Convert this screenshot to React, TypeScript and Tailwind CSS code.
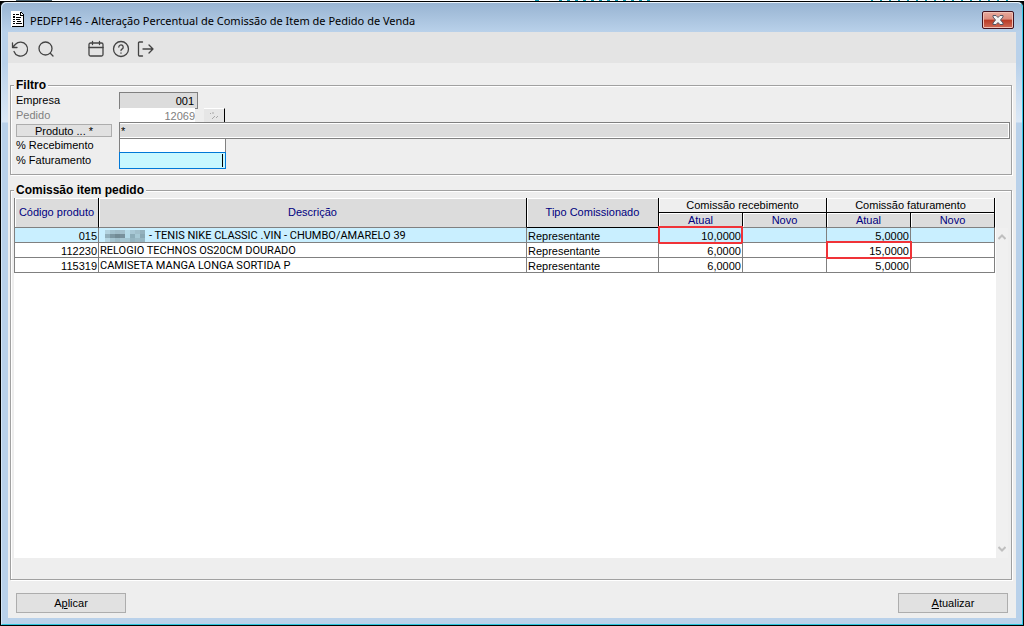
import React, { useState } from 'react'

const rows = [
  { codigo: '015', descricao: '- TENIS NIKE CLASSIC .VIN - CHUMBO/AMARELO 39', tipo: 'Representante', receb: '10,0000', fat: '5,0000', oculto: true, mark: 'receb' },
  { codigo: '112230', descricao: 'RELOGIO TECHNOS OS20CM DOURADO', tipo: 'Representante', receb: '6,0000', fat: '15,0000', oculto: false, mark: 'fat' },
  { codigo: '115319', descricao: 'CAMISETA MANGA LONGA SORTIDA P', tipo: 'Representante', receb: '6,0000', fat: '5,0000', oculto: false, mark: '' },
]

const mosaic = [
  '#b3d3e0', '#a3c2ce', '#9fbcc8', '#a3c0cc', '#b6dbe8', '#a8c8d5', '#a0bfcb', '#94b1bd',
  '#93b0bc', '#7c97a2', '#728b95', '#78919c', '#b4dbe9', '#8cadb9', '#a6c9d5', '#8aa8b4',
  '#b5d6e3', '#a5c5d1', '#9dbcc8', '#a6c6d2', '#a3c6d3', '#94b5c1', '#9abac6', '#97b6c2',
]

const Hidden = () => (
  <svg className="block" width="40" height="12" viewBox="0 0 40 12" shapeRendering="crispEdges" aria-hidden="true">
    {mosaic.map((c, i) => (
      <rect key={i} x={(i % 8) * 5} y={Math.floor(i / 8) * 4} width="5" height="4" fill={c} />
    ))}
  </svg>
)

const DocIcon = () => (
  <svg width="14" height="17" viewBox="0 0 14 17" shapeRendering="crispEdges">
    <path d="M0 0h9l4 4v12H0z" fill="#fff" />
    <path d="M1 15h12v1H1zM12 4h1v12h-1zM9 1h1v3H9zM9 4h4v1H9zM10 1h1v1h-1zM11 2h1v1h-1zM12 3h1v1h-1z" fill="#000" />
    <path d="M2 3h2v1H2zM5 3h3v1H5zM2 5h2v2H2zM5 6h5v1H5zM2 8h2v1H2zM5 8h4v1H5zM2 10h2v1H2zM6 10h4v1H6zM2 12h2v1H2zM5 12h6v1H5z" fill="#000" />
  </svg>
)

const iconProps = {
  width: 18,
  height: 18,
  viewBox: '0 0 18 18',
  fill: 'none',
  stroke: '#444',
  strokeWidth: 1.3,
  strokeLinecap: 'round' as const,
  strokeLinejoin: 'round' as const,
}

const tools = [
  { name: 'Desfazer', gap: '', icon: <svg {...iconProps}><path d="M1.500 3v4.500h4.500M1.700 7.300 4.500 4.300A7 7 0 1 1 3 11.500" /></svg> },
  { name: 'Pesquisar', gap: 'ml-2', icon: <svg {...iconProps}><circle cx="8.500" cy="8.500" r="6.500" /><path d="M13.300 13.300 16 16" /></svg> },
  { name: 'Agenda', gap: 'ml-8', icon: <svg {...iconProps}><rect x="2" y="3" width="14" height="13" rx="1.500" /><path d="M2 7.500h14M5.500 1.500v3M12.500 1.500v3" /></svg> },
  { name: 'Ajuda', gap: 'ml-[7px]', icon: <svg {...iconProps}><circle cx="9" cy="9" r="7.500" /><path d="M6.800 7a2.200 2.200 0 1 1 3.500 1.900C9.500 9.400 9 9.800 9 10.500M9 13v.2" /></svg> },
  { name: 'Sair', gap: 'ml-[7px]', icon: <svg {...iconProps}><path d="M5.500 2H2.500a1 1 0 0 0-1 1v12a1 1 0 0 0 1 1h3M6 9h10M12 5l4 4-4 4" /></svg> },
]

const group = 'min-w-0 border border-[#a0a0a0] shadow-[1px_1px_0_#fff,inset_1px_1px_0_#fff]'
const legend = 'bg-[#eee] px-0.5 text-[12px] leading-[14px] font-bold'
const label = 'w-[103px] shrink-0 pb-0.5'
const th = 'border-r border-b border-black p-0 font-normal shadow-[inset_1px_1px_0_#fff]'
const td = 'relative border-r border-b border-[#808080] px-px pt-0.5 pb-0 leading-[12px] whitespace-nowrap'
const action = 'h-5 w-[110px] border border-[#adadad] bg-[#e1e1e1] text-center'

const App = () => {
  const [receb, setReceb] = useState('')
  const [fat, setFat] = useState('')

  return (
    <div className="flex min-h-screen flex-col bg-black font-['Liberation_Sans',Arial,sans-serif] text-[11px] leading-[14px] text-black">
      {/* slice of the screen behind the window */}
      <div className="flex h-px bg-white">
        <span className="ml-4 w-9 bg-[#4d6470]"></span>
        <span className="ml-[483px] w-1 bg-[#0c9bb0]"></span>
        <span className="ml-5 w-24 bg-[repeating-linear-gradient(90deg,#0c9bb0_0_3px,#fff_3px_8px)]"></span>
        <span className="ml-[216px] w-[138px] bg-[repeating-linear-gradient(90deg,#0c9bb0_0_2px,#fff_2px_9px)]"></span>
      </div>

      <div className="flex flex-1 flex-col rounded-t-md border border-black bg-[#b9d1ea]">
        <div className="flex flex-1 flex-col rounded-t-md border-t border-r border-b border-l border-t-[#eaf3fb] border-r-[#35c8e8] border-b-[#2cc4dc] border-l-[#d5e6f5] bg-[linear-gradient(#98b4d2_0px,#b9d1ea_29px,#b9d1ea_60px,#dbe8f6_119px,#b9d1ea_120px)] px-[6px] pb-[6px]">
          <header className="flex h-[29px] items-center">
            <span className="mt-1 ml-[3px]"><DocIcon /></span>
            <h1 className="ml-[5px] pt-1.5 font-['Noto_Sans','Segoe_UI',sans-serif] text-[11px] leading-4">PEDFP146 - Alteração Percentual de Comissão de Item de Pedido de Venda</h1>
            <button type="button" aria-label="Fechar" className="mt-1 mr-0.5 ml-auto flex h-[18px] w-8 items-center justify-center rounded-xs border border-[#43131f] bg-[linear-gradient(#e8a99c_0%,#dc8c7d_45%,#b93a25_50%,#cf6b57_100%)] shadow-[inset_0_0_0_1px_#f0c0b5]">
              <svg width="12" height="10" viewBox="0 0 12 10">
                <path d="M1 .5h3l2 2 2-2h3v1.500L8.500 5 11 8v1.500H8l-2-2-2 2H1V8l2.500-3L1 2z" fill="#f4f4f4" stroke="#535666" />
              </svg>
            </button>
          </header>

          <main className="flex flex-1 flex-col bg-[#eee]">
            <nav className="flex h-[31px] items-center bg-[#e4e4e4] pl-[3px]">
              {tools.map(t => (
                <button key={t.name} type="button" aria-label={t.name} className={'pt-0.5 ' + t.gap}>{t.icon}</button>
              ))}
            </nav>

            <form className="flex flex-1 flex-col pt-[15px] pr-1 pb-[5px] pl-0.5" onSubmit={e => e.preventDefault()}>
              <fieldset className={group + ' pt-px pr-px pb-[6px] pl-[3px]'}>
                <legend className={legend}>Filtro</legend>
                <div className="flex h-[15px] items-center pl-0.5">
                  <label htmlFor="empresa" className={label}>Empresa</label>
                  <input id="empresa" className="h-[17px] w-[79px] border border-[#808080] bg-[#dcdcdc] px-[3px] text-right" defaultValue="001" readOnly />
                </div>
                <div className="flex h-[15px] items-center pl-0.5">
                  <label htmlFor="pedido" className={label + ' text-[#808080]'}>Pedido</label>
                  <input id="pedido" className="ml-px h-[15px] w-[75px] bg-white text-right text-[#808080]" defaultValue="12069" disabled />
                  <button type="button" disabled aria-label="Buscar pedido" className="ml-[9px] flex h-[15px] w-[21px] items-center justify-center border-t border-r border-b border-t-white border-r-black border-b-[#a0a0a0] bg-[#e6e6e6]">
                    <svg width="10" height="8" viewBox="0 0 10 8" fill="none" stroke="#a8a8a8">
                      <path d="M1 1l1 1M4 0v2M3 7l3-3M7 6l2-2" />
                    </svg>
                  </button>
                </div>
                <div className="flex h-[15px] items-center pl-0.5">
                  <button type="button" className="mr-[7px] h-[13px] w-24 shrink-0 border border-[#adadad] bg-[#e1e1e1] pt-px leading-[11px]">Produto ... *</button>
                  <input aria-label="Produto" className="h-[17px] min-w-0 flex-1 border border-[#808080] bg-[#dcdcdc] px-px shadow-[inset_-1px_-1px_0_#fff,inset_0_1px_0_#fff]" defaultValue="*" readOnly />
                </div>
                <div className="flex h-[15px] items-center pl-0.5">
                  <label htmlFor="receb" className={label}>% Recebimento</label>
                  <input id="receb" className="h-[15px] w-[107px] border-t border-r border-l border-[#808080] bg-white px-[3px] text-right" value={receb} onChange={e => setReceb(e.target.value)} />
                </div>
                <div className="flex h-[15px] items-center pl-0.5">
                  <label htmlFor="fat" className={label}>% Faturamento</label>
                  <div className="flex h-[17px] w-[107px] items-center border border-[#0078d7] bg-[#c8f8ff] pr-0.5">
                    <input id="fat" className="h-[15px] min-w-0 flex-1 text-right caret-transparent outline-none" value={fat} onChange={e => setFat(e.target.value)} />
                    <span className="h-[13px] w-px bg-black"></span>
                  </div>
                </div>
              </fieldset>

              <section className={group + ' mt-[15px] flex flex-1 flex-col pr-[3px] pb-[21px] pl-[3px]'}>
                <h2 className={legend + ' -mt-2 self-start'}>Comissão item pedido</h2>
                <div className="mt-px flex flex-1">
                  <div className="min-w-0 flex-1 bg-white pr-px">
                    <table className="w-full table-fixed border-separate border-spacing-0 border-l border-[#808080]">
                      <colgroup>
                        <col className="w-[84px]" />
                        <col />
                        <col className="w-[132px]" />
                        <col className="w-[84px]" />
                        <col className="w-[84px]" />
                        <col className="w-[84px]" />
                        <col className="w-[84px]" />
                      </colgroup>
                      <thead className="bg-[#dcdcdc] text-[#000080]">
                        <tr className="h-[15px]">
                          <th rowSpan={2} className={th + ' border-b-[#808080] pb-0.5'}>Código produto</th>
                          <th rowSpan={2} className={th + ' border-b-[#808080] pb-0.5'}>Descrição</th>
                          <th rowSpan={2} className={th + ' pb-0.5'}>Tipo Comissionado</th>
                          <th colSpan={2} className={th + ' bg-[#eee] text-black'}>Comissão recebimento</th>
                          <th colSpan={2} className={th + ' bg-[#eee] text-black'}>Comissão faturamento</th>
                        </tr>
                        <tr className="h-[15px]">
                          <th className={th + ' border-b-[#808080]'}>Atual</th>
                          <th className={th + ' border-b-[#808080]'}>Novo</th>
                          <th className={th + ' border-b-[#808080]'}>Atual</th>
                          <th className={th + ' border-b-[#808080]'}>Novo</th>
                        </tr>
                      </thead>
                      <tbody>
                        {rows.map((r, i) => (
                          <tr key={r.codigo} className={i === 0 ? 'h-[15px] bg-[#c9efff]' : 'h-[15px] bg-white'}>
                            <td className={td + ' text-right'}>{r.codigo}</td>
                            <td className={td + " font-['Roboto','Liberation_Sans',sans-serif]"}>
                              <div className="flex items-center gap-1">
                                {r.oculto && <span className="ml-[5px]"><Hidden /></span>}
                                {r.descricao}
                              </div>
                            </td>
                            <td className={td}>{r.tipo}</td>
                            <td className={td + ' text-right'}>
                              {r.receb}
                              {r.mark === 'receb' && <span className="absolute -top-0.5 -right-px -bottom-0.5 -left-px border-2 border-[#f03338]"></span>}
                            </td>
                            <td className={td}></td>
                            <td className={td + ' text-right'}>
                              {r.fat}
                              {r.mark === 'fat' && <span className="absolute -top-0.5 -right-0.5 -bottom-0.5 -left-px z-10 border-2 border-[#f03338]"></span>}
                            </td>
                            <td className={td}></td>
                          </tr>
                        ))}
                      </tbody>
                    </table>
                  </div>
                  <div className="mt-[30px] flex w-3 flex-col items-center justify-between bg-[#f0f0f0] py-1">
                    <svg width="8" height="9" viewBox="0 0 8 9" fill="none" stroke="#bfbfbf" strokeWidth="2"><path d="M.5 7 4 3.500 7.500 7" /></svg>
                    <svg width="8" height="9" viewBox="0 0 8 9" fill="none" stroke="#bfbfbf" strokeWidth="2"><path d="M.5 2 4 5.500 7.500 2" /></svg>
                  </div>
                </div>
              </section>

              <div className="mt-[13px] flex justify-between pr-1 pl-[6px]">
                <button type="button" className={action}>A<u>p</u>licar</button>
                <button type="button" className={action}><u>A</u>tualizar</button>
              </div>
            </form>
          </main>
        </div>
      </div>
    </div>
  )
}
export default App
